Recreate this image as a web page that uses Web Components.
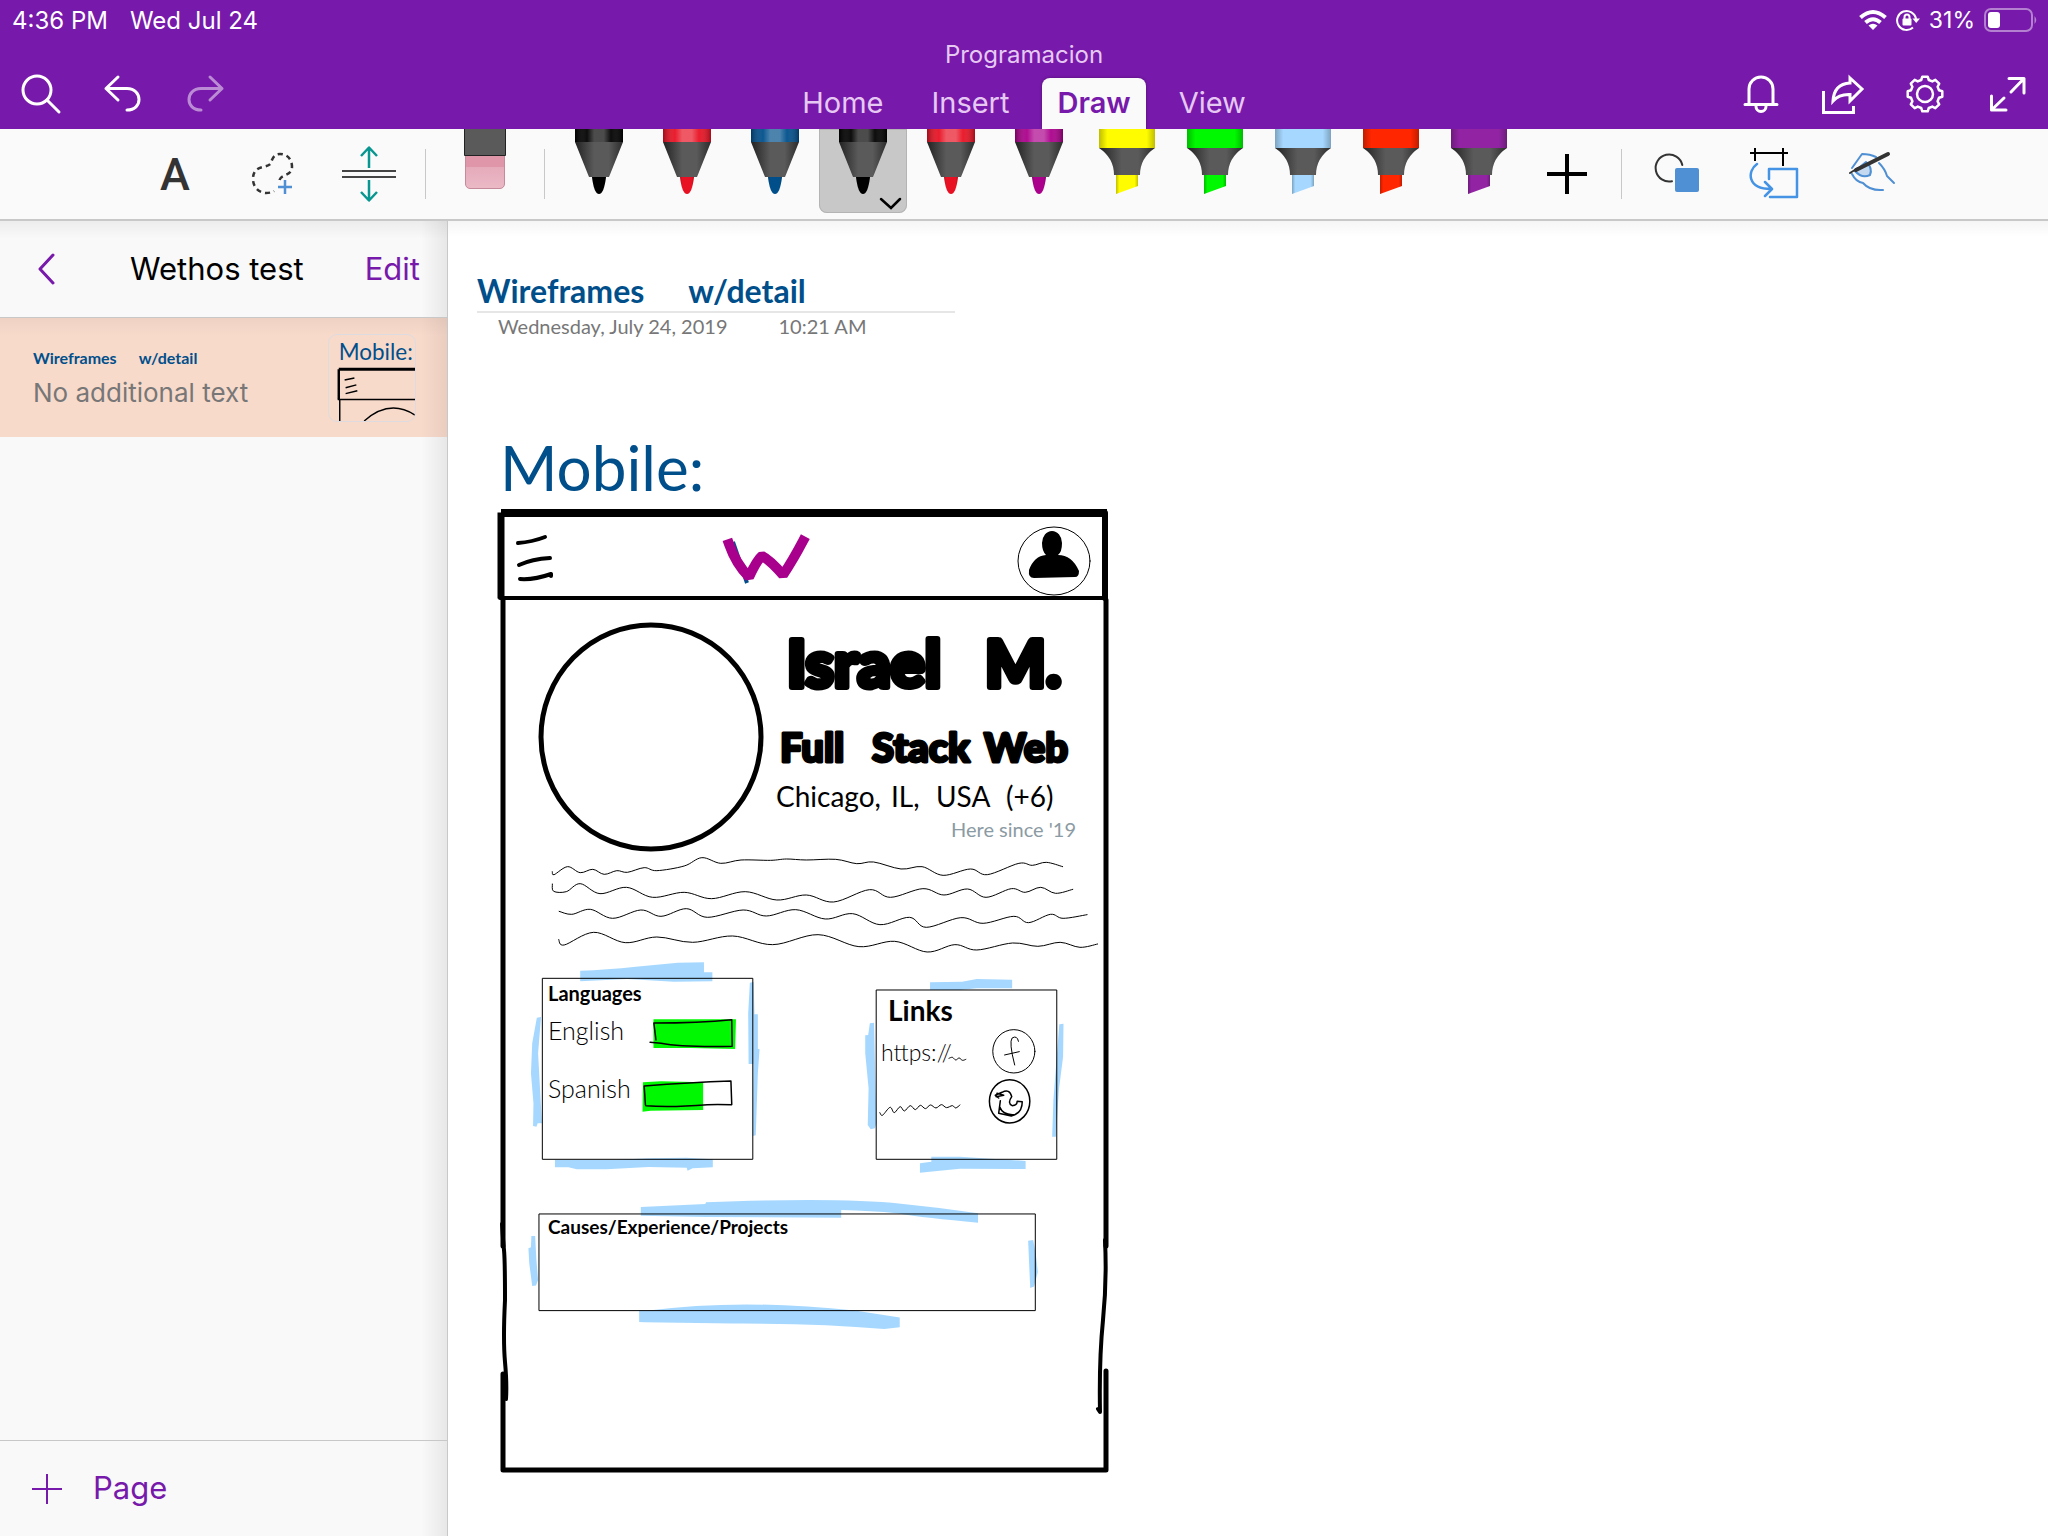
<!DOCTYPE html>
<html lang="en">
<head>
<meta charset="utf-8">
<title>Programacion</title>
<style>
html,body{margin:0;height:100%}
body{font-family:Inter,"Liberation Sans",sans-serif;background:#fff;--purple:#7719aa;--bar:#fafafa;--line:#c8c8c8}
</style>
</head>
<body>
<note-app></note-app>
<script>
const reset = `*{box-sizing:border-box}button{font:inherit;color:inherit;background:none;border:0;padding:0;margin:0;display:flex;align-items:center;justify-content:center}svg{display:block}h1,h2,p{margin:0;font-weight:400}`;

class Base extends HTMLElement {
  constructor() {
    super();
    this.attachShadow({ mode: 'open' });
  }
  connectedCallback() {
    this.shadowRoot.innerHTML = `<style>${reset}${this.css()}</style>${this.html()}`;
  }
}

/* Gear outline with eight teeth, centred in a 48px box. */
const gear = (() => {
  const pts = [];
  for (let i = 0; i < 8; i++) {
    const c = i * 45 - 90;
    for (const [a, r] of [[-15, 14.5], [-9, 17.5], [9, 17.5], [15, 14.5]]) {
      const t = (c + a) * Math.PI / 180;
      pts.push((24 + r * Math.cos(t)).toFixed(1) + ' ' + (24 + r * Math.sin(t)).toFixed(1));
    }
  }
  return 'M' + pts.join('L') + 'Z';
})();

/* Catmull-Rom curve through a list of "x,y" points. */
const spline = s => {
  const p = s.split(' ').map(q => q.split(',').map(Number));
  let d = `M${p[0]}`;
  for (let i = 0; i < p.length - 1; i++) {
    const a = p[i - 1] || p[i], b = p[i], c = p[i + 1], e = p[i + 2] || c;
    d += `C${b[0] + (c[0] - a[0]) / 6},${b[1] + (c[1] - a[1]) / 6} ${c[0] - (e[0] - b[0]) / 6},${c[1] - (e[1] - b[1]) / 6} ${c}`;
  }
  return d;
};

const icons = {
  search: [48, '<g stroke-width="3"><circle cx="20" cy="20" r="14"/><path d="M30 30L42 42"/></g>'],
  undo: [48, '<path stroke-width="3" d="M19 7L7 18.5 19 30M7 18.5H28C36 18.5 40 24 40 29.5S36 40 28 40"/>'],
  redo: [48, '<path stroke-width="3" opacity=".5" d="M29 7L41 18.5 29 30M41 18.5H20C12 18.5 8 24 8 29.5S12 40 20 40"/>'],
  bell: [48, '<path stroke-width="3" d="M12 34V19a12 12 0 0 1 24 0V34M8 34.5H40M19 36.5a5 5 0 0 0 10 0"/>'],
  share: [48, '<path stroke-width="3" stroke-linejoin="miter" stroke-linecap="butt" d="M4.500 21V42.500H34.500V36M31 8L43 19 31 31V24.500Q20 24 14 31 15 14 31 13Z"/>'],
  gear: [48, `<path stroke-width="2.500" d="${gear}"/><circle cx="24" cy="24" r="8" stroke-width="2.500"/>`],
  expand: [48, '<path stroke-width="3" d="M26 8.500H41V23M41 8.500L28 22M8.500 26V40H23M8.500 40L21 28"/>'],
  lasso: [56, '<path stroke="#333" stroke-width="2.500" stroke-linecap="butt" stroke-dasharray="5 4" d="M35.500 34C37 28 48 30 48 21C48 12 42 8 36 8C30 8 28 13 27 17C24 23 9 18 9 33C9 42 16 47 22 47C26 47 29 46 30 45"/><path stroke="#4f8fd3" stroke-width="2.500" stroke-linecap="butt" d="M34 41H48M41 34V48"/>'],
  space: [56, '<path stroke="#444" stroke-width="2" stroke-linecap="butt" d="M1 25H55M1 31H55"/><path stroke="#089690" stroke-width="2.500" stroke-linecap="butt" d="M28 22V2M20 10L28 1.500 36 10M28 34V54M20 46L28 54.500 36 46"/>'],
  plus: [56, '<path stroke="#000" stroke-width="4" stroke-linecap="butt" d="M8 28H48M28 8V48"/>'],
  shapes: [56, '<path stroke="#333" stroke-width="2" d="M33.300 19A13.500 13.500 0 1 0 23 35.200"/><rect x="26" y="22" width="24" height="24" rx="2" fill="#4f8fd3" stroke="none"/>'],
  convert: [56, '<path stroke="#000" stroke-width="2" stroke-linecap="butt" d="M4 7H42M9 2V15M37 2V20"/><path stroke="#4593e4" stroke-width="2.500" d="M23 33V23H51V51H24M11 18C1 25 1 43 25 43M19 36L26 43 19 50"/>'],
  hand: [56, '<path stroke="#4f8fd3" stroke-width="2" d="M9 22L19 8Q27 8 33 11M36 17Q42 23 44 30L51 37M9 28Q13 36 20 37Q27 45 40 44"/><path fill="#c4d9f0" stroke="#4f8fd3" stroke-width="2" d="M12 25L23 16Q30 22 27 29Q19 33 12 25Z"/><path stroke="#333" stroke-width="4" d="M13 24L45 8"/><path stroke="#333" stroke-width="2" d="M7 27L15 22"/>'],
  back: [48, '<path stroke-width="3" d="M30 10L17 24 30 38"/>'],
  add: [48, '<path stroke-width="2" stroke-linecap="butt" d="M9 24H39M24 9V39"/>']
};
class NoteIcon extends Base {
  css() { return ':host{display:block}svg{fill:none;stroke:currentColor;stroke-linecap:round;stroke-linejoin:round}'; }
  html() {
    const [s, d] = icons[this.getAttribute('name')];
    return `<svg width="${s}" height="${s}" viewBox="0 0 ${s} ${s}" aria-hidden="true">${d}</svg>`;
  }
}
customElements.define('note-icon', NoteIcon);

class StatusBar extends Base {
  css() { return `:host{display:flex;justify-content:space-between;align-items:center;height:40px;padding:0 10px 0 12px;font-size:24px;color:#fff}
    div{display:flex;align-items:center;gap:22px}.r{gap:9px;font-size:23px}`; }
  html() { return `<div><span>4:36 PM</span><span>Wed Jul 24</span></div>
    <div class="r">
      <svg width="28" height="22" viewBox="0 0 28 22" fill="none" stroke="#fff" stroke-width="4"><path d="M1.500 8.500Q14 -2.500 26.500 8.500M6.500 13.500Q14 7 21.500 13.500"/><path d="M14 21L9.500 16.500Q14 13 18.500 16.500Z" fill="#fff" stroke="none"/></svg>
      <svg width="24" height="22" viewBox="0 0 24 22" fill="none" stroke="#fff" stroke-width="2"><path d="M17 18.500A9.500 9.500 0 1 1 20 10"/><path d="M16.500 9.500H24L20.200 14Z" fill="#fff" stroke="none"/><rect x="6.500" y="9.500" width="9" height="7" rx="1" fill="#fff" stroke="none"/><path d="M8.500 10V8a2.500 2.500 0 0 1 5 0V10"/></svg>
      <span>31%</span>
      <svg width="54" height="24" viewBox="0 0 54 24"><rect x="1" y="1" width="47" height="22" rx="6" fill="none" stroke="#fff" stroke-opacity=".45" stroke-width="2"/><rect x="4" y="4" width="12" height="16" rx="3" fill="#fff"/><path d="M50.500 8Q54 12 50.500 16Z" fill="#fff" fill-opacity=".45"/></svg>
    </div>`; }
}
customElements.define('status-bar', StatusBar);

class NavBar extends Base {
  css() { return `:host{display:grid;grid-template-columns:1fr auto 1fr;height:89px;color:#fff}
    .i{display:flex;gap:26px;padding:19px 13px 0;align-items:center}.e{justify-content:flex-end}
    .i button{width:56px;height:56px}
    .c{display:flex;flex-direction:column;align-items:center;justify-content:space-between}
    h1{font-size:24px;line-height:30px;color:#e6c9f2}
    nav{display:flex;gap:18px;font-size:29px;color:#e6c9f2}
    nav button{height:51px;padding:0 15px 2px;border-radius:8px 8px 0 0}
    nav .on{background:var(--bar);color:var(--purple);font-weight:600;box-shadow:0 0 3px rgba(0,0,0,.35);clip-path:inset(-4px -4px 0 -4px)}`; }
  html() {
    const b = (n, l) => `<button aria-label="${l}"><note-icon name="${n}"></note-icon></button>`;
    return `<div class="i">${b('search', 'Search')}${b('undo', 'Undo')}${b('redo', 'Redo')}</div>
    <div class="c"><h1>Programacion</h1><nav><button>Home</button><button>Insert</button><button class="on">Draw</button><button>View</button></nav></div>
    <div class="i e">${b('bell', 'Notifications')}${b('share', 'Share')}${b('gear', 'Settings')}${b('expand', 'Full screen')}</div>`;
  }
}
customElements.define('nav-bar', NavBar);

class DrawPen extends Base {
  css() { return `:host{display:block;width:88px}button{width:88px;height:84px;border-radius:0 0 8px 8px}
    :host([selected]) button{background:var(--line);box-shadow:inset 0 0 0 1px #b4b4b4}`; }
  html() {
    const c = this.getAttribute('color'), hl = this.getAttribute('kind') === 'highlighter';
    const band = hl ? '<path d="M16 0H72V19H16Z" fill="COL"/><path d="M16 0H72V19H16Z" fill="url(#edge)"/>'
      : '<path d="M20 0H68V13H20Z" fill="COL"/><path d="M20 0H68V13H20Z" fill="url(#shine)"/>';
    const body = hl ? '<path d="M16 19H72Q57 29 57 46H31Q31 29 16 19Z" fill="url(#dark)"/><path d="M33 46H55V57L33 65Z" fill="COL"/><path d="M33 46H55V57L33 65Z" fill="url(#edge)"/>'
      : '<path d="M20 13H68L54 48H34Z" fill="url(#dark)"/><path d="M37 48H51Q49 65 44 65T37 48Z" fill="COL"/><path d="M37 48H51Q49 65 44 65T37 48Z" fill="url(#edge)"/>';
    const more = this.hasAttribute('selected') ? '<path d="M62 70L72 79 81 70" fill="none" stroke="#000" stroke-width="2.500" stroke-linecap="round"/>' : '';
    return `<button aria-label="${this.getAttribute('label')}"><svg width="88" height="84" viewBox="0 0 88 84" aria-hidden="true"><defs>
      <linearGradient id="shine"><stop offset="0" stop-color="#000" stop-opacity=".3"/><stop offset=".25" stop-color="#fff" stop-opacity=".05"/><stop offset=".4" stop-color="#fff" stop-opacity=".3"/><stop offset=".6" stop-color="#fff" stop-opacity=".3"/><stop offset=".75" stop-color="#fff" stop-opacity=".05"/><stop offset="1" stop-color="#000" stop-opacity=".3"/></linearGradient>
      <linearGradient id="edge"><stop offset="0" stop-color="#000" stop-opacity=".25"/><stop offset=".15" stop-color="#000" stop-opacity="0"/><stop offset=".85" stop-color="#000" stop-opacity="0"/><stop offset="1" stop-color="#000" stop-opacity=".25"/></linearGradient>
      <linearGradient id="dark"><stop offset="0" stop-color="#222"/><stop offset=".4" stop-color="#5a5a5a"/><stop offset=".7" stop-color="#5a5a5a"/><stop offset="1" stop-color="#2c2c2c"/></linearGradient>
      </defs>${(band + body).replaceAll('COL', c)}${more}</svg></button>`;
  }
}
customElements.define('draw-pen', DrawPen);

class DrawTools extends Base {
  css() { return `:host{display:flex;justify-content:center;align-items:flex-start;height:92px;background:var(--bar);border-bottom:2px solid var(--line)}
    .g{display:flex;height:90px}.t{width:97px;height:90px}.a{font-family:Roboto,sans-serif;font-weight:500;font-size:45px;color:#333}
    .e{width:118px;height:90px;align-items:flex-start}.p{padding:0 10px}
    .add{width:88px;height:90px}i{width:1px;height:50px;margin-top:20px;background:var(--line)}.l{padding-right:7px}.r{padding:0 2px 0 7px}`; }
  html() {
    const t = (n, l) => `<button class="t" aria-label="${l}"><note-icon name="${n}"></note-icon></button>`;
    const pens = [['#000', 'Black pen'], ['#e81123', 'Red pen'], ['#004f8b', 'Blue pen'], ['#000', 'Black marker', 1], ['#e81123', 'Red marker'], ['#ab008b', 'Purple marker']]
      .map(([c, l, s]) => `<draw-pen color="${c}" label="${l}" ${s ? 'selected' : ''}></draw-pen>`).join('');
    const hls = [['#fffc00', 'Yellow'], ['#00f900', 'Green'], ['#a6d8ff', 'Blue'], ['#ff2600', 'Red'], ['#9224a4', 'Purple']]
      .map(([c, l]) => `<draw-pen kind="highlighter" color="${c}" label="${l} highlighter"></draw-pen>`).join('');
    return `<div class="g l"><button class="t a">A</button>${t('lasso', 'Lasso select')}${t('space', 'Insert space')}</div><i></i>
    <button class="e" aria-label="Eraser"><svg width="42" height="64" viewBox="0 0 42 64"><defs><linearGradient id="k" x2="0" y2="1"><stop offset="0" stop-color="#e2a3b4"/><stop offset="1" stop-color="#ebb9c7"/></linearGradient></defs><path d="M1.500 26H40.500V55a4.500 4.500 0 0 1-4.500 4.500H6a4.500 4.500 0 0 1-4.500-4.500Z" fill="url(#k)" stroke="#c58b9b"/><path d="M2 26H40V38H2Z" fill="#df96a9"/><path d="M.500 0V26.500H41.500V0" fill="#5a5a5a" stroke="#222"/></svg></button><i></i>
    <div class="g p">${pens}${hls}<button class="add" aria-label="Add pen"><note-icon name="plus"></note-icon></button></div><i></i>
    <div class="g r">${t('shapes', 'Shapes')}${t('convert', 'Ink to shape')}${t('hand', 'Draw with touch')}</div>`;
  }
}
customElements.define('draw-tools', DrawTools);

class PageThumb extends Base {
  css() { return `:host{display:block;flex:none}svg{border:1px solid #dddbe0;border-radius:9px;font-family:Lato,sans-serif}`; }
  html() { return `<svg width="88" height="88" viewBox="0 0 88 88"><text x="10" y="26" font-size="23" fill="#004f8b">Mobile:</text>
    <g fill="none" stroke="#000" stroke-width="1.500"><path d="M10 35H88" stroke-width="3"/><path d="M10 35V66" stroke-width="2.500"/><path d="M9 66H88M11 66V88M16 46L26 44M17 54L28 51M17 60L29 57M36 88Q62 65 88 82"/></g></svg>`; }
}
customElements.define('page-thumb', PageThumb);

class PageList extends Base {
  css() { return `:host{display:flex;flex-direction:column;flex:0 0 448px;background:linear-gradient(to left,rgba(0,0,0,.07),transparent 26px) #f9f9f9;border-right:1px solid var(--line)}
    header{display:flex;align-items:center;justify-content:space-between;height:97px;padding:0 27px 0 23px;border-bottom:1px solid var(--line);font-size:31px;background:linear-gradient(rgba(0,0,0,.05),transparent 18px)}
    h2{font-size:31px;padding:0 2px 2px 0}header .t{padding-bottom:2px}.p,footer{color:var(--purple)}
    .item{display:flex;align-items:center;justify-content:space-between;height:119px;padding:0 31px 0 33px;text-decoration:none;background:linear-gradient(rgba(0,0,0,.04),transparent 18px),linear-gradient(to left,rgba(0,0,0,.06),transparent 26px) #f8dacb}
    .k{display:flex;gap:22px;font:700 16px/24px Lato,sans-serif;color:#004f8b}
    .s{font-size:26px;line-height:34px;color:#777;margin-top:6px}
    footer{margin-top:auto;height:96px;border-top:1px solid var(--line);display:flex;align-items:center;padding:0 23px;font-size:31px}
    footer button{gap:22px}footer span{padding-bottom:2px}`; }
  html() { return `<header><button class="p" aria-label="Back"><note-icon name="back"></note-icon></button><h2>Wethos test</h2><button class="p t">Edit</button></header>
    <a class="item" href="#page"><div><div class="k"><span>Wireframes</span><span>w/detail</span></div><div class="s">No additional text</div></div><page-thumb></page-thumb></a>
    <footer><button><note-icon name="add"></note-icon><span>Page</span></button></footer>`; }
}
customElements.define('page-list', PageList);

class InkDrawing extends Base {
  css() { return `:host{display:block}svg{overflow:visible;font-family:Lato,"Liberation Sans",sans-serif}
    .ink{fill:none;stroke:#000;stroke-linecap:round;stroke-linejoin:round}.ink *,.v *{vector-effect:non-scaling-stroke}`; }
  html() {
    const waves = [
      '172,95 176,104 208,80 238,98 268,88 295,103 325,92 350,97 390,83 420,92 485,78 527,53 572,70 620,60 690,61 728,57 775,60 845,58 895,71 935,66 1000,87 1050,80 1100,106 1165,87 1205,104 1280,70 1312,76 1345,67 1384,80',
      '172,132 175,154 205,155 238,131 285,161 348,142 410,172 485,157 550,176 630,155 705,180 775,165 840,186 925,149 975,172 1052,146 1102,165 1158,147 1202,172 1262,146 1295,157 1332,142 1367,160 1408,148',
      '188,214 218,223 262,208 315,235 382,210 430,229 490,206 540,232 625,210 680,228 750,209 820,237 885,221 950,254 1020,232 1060,262 1142,233 1195,250 1268,229 1303,248 1355,223 1385,235 1442,224',
      '187,298 200,315 270,277 345,308 420,291 505,307 600,288 695,314 803,284 900,320 985,304 1062,336 1128,314 1180,330 1265,309 1325,319 1378,307 1425,322 1467,312',
      '950,818 956,826 974,802 984,818 998,800 1008,813 1022,797 1034,809 1046,796 1058,806 1070,795 1083,804 1096,794 1108,803 1122,797 1130,804 1140,795',
      '1114,655 1122,652 1130,660 1138,654 1146,661 1154,658'
    ].map(w => `<path d="${spline(w)}"/>`).join('');
    return `<svg width="620" height="1045" viewBox="495 430 620 1045" role="img" aria-label="Mobile wireframe sketch">
    <text x="500" y="491" font-size="62" fill="#004f8b">Mobile:</text>
    <g class="v" transform="translate(480 840) scale(.421 .3333)">
      <g fill="#a6d8ff">
        <path d="M238,392Q300,389 370,380L470,368 532,367V397H552V424L460,425 350,417 238,424Z"/>
        <path d="M135,533L145,531 138,640 147,850 137,850 134,860 126,858 127,790 121,700 124,610Z"/>
        <path d="M641,428L650,426 652,523 660,523 660,626 664,628 660,700 657,812 655,886 648,888 649,672 638,672 637,520Z"/>
        <path d="M178,960L320,960 400,955 490,953 553,958V982L505,985 493,992 491,983 400,981 300,988 230,988 210,982 178,982Z"/>
        <path d="M1069,427L1145,425 1180,417 1264,419V445L1180,445 1140,450 1069,450Z"/>
        <path d="M926,550L936,548 938,660 942,850 938,865 928,868 921,855 923,745 915,640 915,586 922,585Z"/>
        <path d="M1376,553L1386,551 1385,650 1375,750 1368,890 1359,890 1362,780 1370,650Z"/>
        <path d="M1072,950L1140,950 1296,963V987L1140,986 1045,998V970L1072,965Z"/>
        <path d="M382,1101L535,1092 537,1087Q850,1072 1000,1091Q1090,1102 1183,1120V1148Q1060,1135 990,1120Q930,1112 858,1110V1133L535,1131 382,1127Z"/>
        <path d="M122,1188L131,1188 134,1260 138,1320 133,1337 124,1338 117,1270 115,1225 121,1222Z"/>
        <path d="M1302,1202L1314,1200 1320,1240 1325,1296 1316,1340 1307,1344 1305,1290Z"/>
        <path d="M378,1412H400Q620,1375 890,1412L997,1433V1462L960,1467Q800,1450 600,1451L390,1447 378,1446Z"/>
      </g>
      <g fill="#00f900"><path d="M412,538L608,538 606,627 500,624 412,624Z"/><path d="M387,727L430,724 530,727V810L405,812 386,815Z"/></g>
      <g class="ink" stroke-width="1">${waves}</g>
      <g class="ink" stroke-width="1.500">
        <path stroke-width="1" d="M149,415H648V958H149ZM942,450H1370V958H942ZM141,1122H1319V1412H141Z"/>
        <ellipse cx="1268" cy="634" rx="50" ry="65" stroke-width="1"/><ellipse cx="1258" cy="784" rx="48" ry="65"/>
        <path stroke-width="1" d="M1279,604Q1276,585 1264,594Q1256,606 1270,675M1246,645L1281,635"/>
        <path d="M1232,774L1224,766 1240,757Q1258,745 1263,770Q1252,790 1264,797Q1276,797 1276,784L1288,785Q1288,820 1262,828L1232,820 1236,782M1234,800Q1242,826 1268,824M1228,760L1244,766 1226,770"/>
        <path d="M418,600L413,549Q520,549 598,539L599,619Q480,622 430,610L404,607M393,795L390,738Q500,727 596,723L598,794Q560,793 540,794Q450,803 394,797"/>
      </g>
    </g>
    <g class="ink" stroke-width="5">
      <path stroke-width="8" stroke-linecap="square" d="M505 513H1103"/><path stroke-width="7" stroke-linecap="square" d="M501 516V595"/><path stroke-width="6" d="M1105 513V598"/>
      <path stroke-width="4" d="M500 598H1106"/><path d="M503 600V1246M1106 600V1246M503 1374V1470H1106V1371"/>
      <path stroke-width="4" d="M502 1224Q503 1240 504 1250T505 1300Q503 1340 505 1362T506 1399M1105 1240Q1107 1280 1103 1320T1100 1412L1098 1409"/>
      <path stroke-width="4" d="M518 543Q532 542 545 537M519 565Q532 559 550 558M520 579Q534 580 551 574V576"/>
      <ellipse cx="651" cy="737" rx="110" ry="112"/><ellipse cx="1054" cy="561" rx="36" ry="34" stroke-width="1"/>
    </g>
    <path d="M1042 543a10 12 0 0 1 20 0q0 9-4 12q14 0 21 16q0 6-4 6l-41 1q-6 0-5-8q5-14 17-15q-4-4-4-12Z"/>
    <path d="M733 542L747 583" stroke="#004f8b" stroke-width="4"/>
    <path d="M729 544Q736 564 749 577Q757 560 762 556Q770 560 783 575Q793 560 803 541" fill="none" stroke="#a8008c" stroke-width="10" stroke-linejoin="bevel" stroke-linecap="square"/>
    <g font-weight="900" stroke="#000" stroke-linejoin="round">
      <text y="687" font-size="64" stroke-width="6"><tspan x="787">Israel</tspan> <tspan x="985">M.</tspan></text>
      <text y="762" font-size="40" stroke-width="3"><tspan x="780">Full</tspan> <tspan x="872">Stack</tspan> <tspan x="984">Web</tspan></text>
    </g>
    <text y="807" font-size="28"><tspan x="776">Chicago,</tspan> <tspan x="891">IL,</tspan> <tspan x="936">USA</tspan> <tspan x="1006">(+6)</tspan></text>
    <text x="951" y="837" font-size="20" fill="#8b9ba3">Here since '19</text>
    <g font-weight="700"><text x="548" y="1001" font-size="20">Languages</text><text x="888" y="1021" font-size="28">Links</text><text x="548" y="1234" font-size="19">Causes/Experience/Projects</text></g>
    <g font-weight="300" font-size="25"><text x="548" y="1040">English</text><text x="548" y="1098">Spanish</text><text x="881" y="1061" font-size="23">https://</text></g>
    </svg>`;
  }
}
customElements.define('ink-drawing', InkDrawing);

class NotePage extends Base {
  css() { return `:host{display:block;flex:1;min-width:0;background:linear-gradient(rgba(0,0,0,.04),transparent 16px) #fff;padding:50px 29px 60px;font-family:Lato,sans-serif}
    h1{display:flex;gap:44px;width:478px;border-bottom:2px solid #e6e6e6;font-size:32px;line-height:40px;font-weight:700;color:#004f8b}
    p{display:flex;gap:51px;padding-left:21px;font-size:20px;line-height:26px;color:#777}
    ink-drawing{margin:91px 0 0 18px}`; }
  html() { return `<h1><span>Wireframes</span><span>w/detail</span></h1><p><span>Wednesday, July 24, 2019</span><span>10:21 AM</span></p><ink-drawing></ink-drawing>`; }
}
customElements.define('note-page', NotePage);

class NoteApp extends Base {
  css() { return `:host{display:flex;flex-direction:column;min-height:100vh}.top{background:var(--purple)}.body{display:flex;flex:1}`; }
  html() { return `<div class="top"><status-bar></status-bar><nav-bar></nav-bar></div><draw-tools></draw-tools><div class="body"><page-list></page-list><note-page></note-page></div>`; }
}
customElements.define('note-app', NoteApp);
</script>
</body>
</html>
